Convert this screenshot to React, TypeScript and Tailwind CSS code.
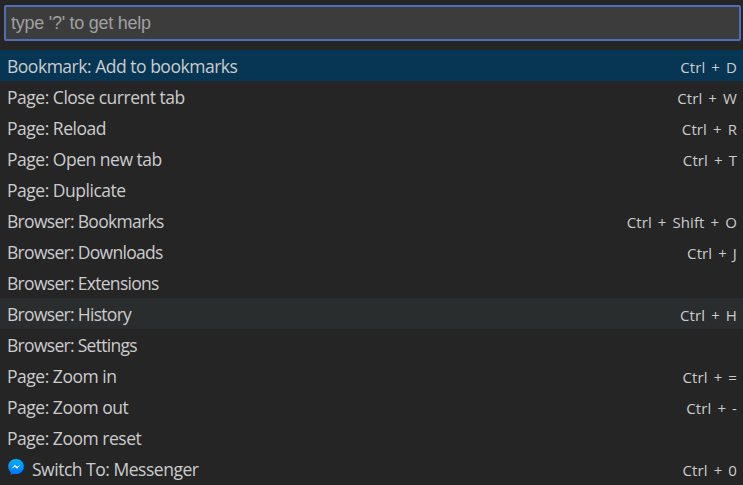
type Command = { label: string; keys?: string; icon?: boolean };

const commands: Command[] = [
  { label: "Bookmark: Add to bookmarks", keys: "Ctrl + D" },
  { label: "Page: Close current tab", keys: "Ctrl + W" },
  { label: "Page: Reload", keys: "Ctrl + R" },
  { label: "Page: Open new tab", keys: "Ctrl + T" },
  { label: "Page: Duplicate" },
  { label: "Browser: Bookmarks", keys: "Ctrl + Shift + O" },
  { label: "Browser: Downloads", keys: "Ctrl + J" },
  { label: "Browser: Extensions" },
  { label: "Browser: History", keys: "Ctrl + H" },
  { label: "Browser: Settings" },
  { label: "Page: Zoom in", keys: "Ctrl + =" },
  { label: "Page: Zoom out", keys: "Ctrl + -" },
  { label: "Page: Zoom reset" },
  { label: "Switch To: Messenger", keys: "Ctrl + 0", icon: true },
];

const SELECTED = 0;
const HOVERED = 8;

function MessengerIcon() {
  return (
    <svg viewBox="0 0 16 16" className="mr-2 -mt-[6px] ml-px h-4 w-4 shrink-0">
      <defs>
        <linearGradient id="messenger" x1="0" y1="0" x2="0" y2="1">
          <stop offset="0" stopColor="#00b2ff" />
          <stop offset="1" stopColor="#0072ff" />
        </linearGradient>
      </defs>
      <path
        d="M8 0C3.500 0 .2 3.300.2 7.500c0 2.300 1 4.300 2.600 5.700V16l2.500-1.300c.8.2 1.700.4 2.700.4 4.500 0 7.800-3.300 7.800-7.600S12.500 0 8 0Z"
        fill="url(#messenger)"
      />
      <path d="M3.300 9.800 7 5.700l2 2 3.700-2L9 9.800l-2-2Z" fill="#fff" />
    </svg>
  );
}

function rowColor(index: number) {
  if (index === SELECTED) return "bg-[#073655]";
  if (index === HOVERED) return "bg-[#2a2d2e]";
  return "";
}

export default function App() {
  return (
    <div className="h-[485px] w-[743px] overflow-hidden bg-[#252526] font-['Open_Sans','Noto_Sans',sans-serif] text-[#cccccc]">
      <div className="pt-[5px] pr-[2px] pb-[9px] pl-1">
        <input
          className="block h-9 w-full rounded-[2px] border-2 border-[#4d6fb5] bg-[#3c3c3c] px-[5px] font-['Liberation_Sans',Arial,sans-serif] text-[18px] tracking-[-0.26px] text-[#cccccc] outline-none placeholder:text-[#a0a0a0]"
          placeholder="type '?' to get help"
        />
      </div>
      <ul>
        {commands.map((command, index) => (
          <li
            key={command.label}
            className={`flex h-[31px] items-center justify-between pr-[6px] pl-[7px] whitespace-nowrap ${rowColor(index)}`}
          >
            <span
              className={`flex items-center pt-[2px] text-[17.5px] ${
                command.label.startsWith("Browser") ? "tracking-[-0.7px]" : "tracking-[-0.48px]"
              }`}
            >
              {command.icon && <MessengerIcon />}
              {command.label}
            </span>
            {command.keys && (
              <span className="pt-[4px] text-[15px] tracking-[0.1px] [word-spacing:2px]">{command.keys}</span>
            )}
          </li>
        ))}
      </ul>
    </div>
  );
}
